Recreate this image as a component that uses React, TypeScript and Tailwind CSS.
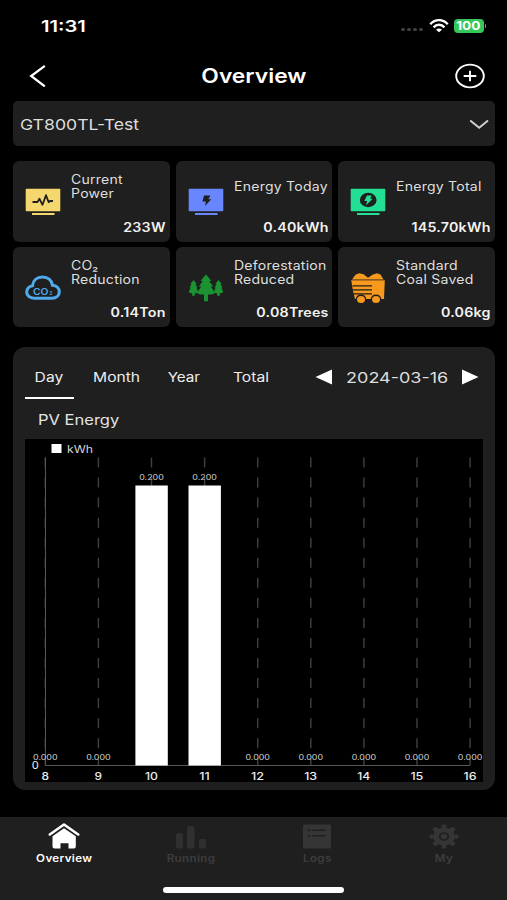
import type { ReactNode } from "react";

const HOURS = [8, 9, 10, 11, 12, 13, 14, 15, 16];
const ENERGY = [0, 0, 0.2, 0.2, 0, 0, 0, 0, 0];

function MonitorIcon({ color, children }: { color: string; children: ReactNode }) {
  return (
    <svg width="36" height="28" viewBox="0 0 36 28">
      <rect x="0.7" y="0.7" width="34.6" height="22.6" rx="0.8" fill={color} />
      <rect x="7" y="25" width="22.5" height="2" fill={color} />
      {children}
    </svg>
  );
}

function CurrentPowerIcon() {
  return (
    <MonitorIcon color="#f4d76d">
      <path
        d="M7.500 14h5l2-3.200 3 6 3.500-9.600 2.700 7 1.300-1.200h3"
        fill="none"
        stroke="#1f1f1f"
        strokeWidth="1.800"
        strokeLinejoin="round"
      />
    </MonitorIcon>
  );
}

function EnergyTodayIcon() {
  return (
    <MonitorIcon color="#6887ff">
      <path d="M16 7.5h6.3l-1.8 3.7h2.8L17 18l.9-4.600h-3.500z" fill="#1f1f1f" />
    </MonitorIcon>
  );
}

function EnergyTotalIcon() {
  return (
    <MonitorIcon color="#22df93">
      <ellipse cx="18.2" cy="12" rx="8.4" ry="7.200" fill="#1f1f1f" />
      <path d="M17 7.5h4.6l-1.4 3.2h2.5L16 17.3l1.2-4.3h-2.9z" fill="#22df93" />
    </MonitorIcon>
  );
}

function CloudIcon() {
  return (
    <svg width="36" height="26" viewBox="0 0 36 26">
      <path
        d="M9 23.2C4.800 23.200 1.700 20.500 1.700 17c0-3.300 2.600-5.700 5.800-6.300C8 5.500 12 2 17.500 2c5.300 0 9.200 3.300 10 8.300 4 .3 6.800 3 6.800 6.500 0 3.700-3.100 6.400-7.300 6.400z"
        fill="none"
        stroke="#4fabed"
        strokeWidth="3.100"
      />
      <text
        x="8"
        y="20"
        fontSize="8.800"
        fontWeight="600"
        textLength="15.500"
        lengthAdjust="spacingAndGlyphs"
        fontFamily="Inter, sans-serif"
        fill="#4fabed"
      >
        CO
      </text>
      <text x="24.500" y="20" fontSize="4.500" fontWeight="700" fontFamily="Inter, sans-serif" fill="#4fabed">
        2
      </text>
    </svg>
  );
}

function TreesIcon() {
  return (
    <svg width="36" height="28" viewBox="0 0 36 28" fill="#1c9332">
      <path d="M18 .5l5.500 6.500h-2.300l4 5.500h-2.400l4.200 6.500c-2 1.500-4.500 1.700-7 1.500v6.800h-4v-6.800c-2.500.2-5 0-7-1.500l4.200-6.500h-2.400l4-5.500h-2.300z" />
      <path d="M5.500 6l3.200 4H7.500l2 3.500H8.300l2 4.500c-1 1-2.300 1.200-3.500 1.200v2.500H4.200v-2.500C3 19.200 1.700 19 .7 18l2-4.500H1.500l2-3.500H2.300z" />
      <path d="M30.500 6l3.200 4h-1.200l2 3.500h-1.200l2 4.500c-1 1-2.300 1.200-3.500 1.200v2.500h-2.600v-2.500c-1.200 0-2.500-.2-3.500-1.200l2-4.500h-1.200l2-3.500h-1.200z" />
    </svg>
  );
}

function CoalIcon() {
  return (
    <svg width="36" height="32" viewBox="0 0 36 32">
      <path d="M2 7.500L5.500 2.800 9 1.200 13.500 2.300 18 5.800 22.500 2.800 27 1.200 30.500 2.500 33.500 7.500z" fill="#f7981f" />
      <path d="M1.200 8.300h33.600L34 27H5L3 19z" fill="#f7981f" />
      <path d="M2.500 13.800h19.500M2.500 17.800h19.500M2.500 21.800h19.500" stroke="#1f1f1f" strokeWidth="1.200" />
      <path d="M1.500 8.300h33" stroke="#a96a1e" strokeWidth="0.700" />
      <ellipse cx="11" cy="27" rx="5.200" ry="4.500" fill="#1f1f1f" />
      <ellipse cx="26" cy="27" rx="5.200" ry="4.500" fill="#1f1f1f" />
      <ellipse cx="11" cy="27.500" rx="4" ry="3.500" fill="#f7981f" />
      <ellipse cx="26" cy="27.500" rx="4" ry="3.500" fill="#f7981f" />
    </svg>
  );
}

type StatProps = {
  icon: ReactNode;
  lines: string[];
  value: string;
};

function StatCard({ icon, lines, value }: StatProps) {
  return (
    <div className="flex rounded-md bg-[#1f1f1f] pr-1">
      <div className="flex w-[58px] shrink-0 justify-center pt-[1px] pl-0.5">
        <div className="flex h-[80px] w-9 items-center">{icon}</div>
      </div>
      <div className="flex min-w-0 flex-1 flex-col justify-between pb-[7px]">
        <div className="flex h-[52px] flex-col justify-center text-[12.5px] leading-[14px] text-[#dedede]">
          {lines.map((line) => (
            <div key={line} className="origin-left scale-x-[1.125] whitespace-nowrap tracking-[0.2px]">
              {line}
            </div>
          ))}
        </div>
        <div className="origin-right scale-x-[1.14] text-right text-[12.5px] leading-[14px] font-semibold whitespace-nowrap tracking-[0.2px] text-[#f2f2f2]">
          {value}
        </div>
      </div>
    </div>
  );
}

function StatusBar() {
  return (
    <div className="flex h-[51px] items-center justify-between pr-[21px] pl-[41px]">
      <div className="origin-left scale-x-[1.26] text-[16px] font-semibold">11:31</div>
      <div className="flex items-center">
        <div className="mt-[7px] mr-1.5 flex gap-0.5">
          {[0, 1, 2, 3].map((dot) => (
            <div key={dot} className="h-[3px] w-1 rounded-sm bg-[#414141]" />
          ))}
        </div>
        <svg width="20" height="14" viewBox="0 0 20 14" fill="none" stroke="#fff" strokeWidth="2.400">
          <path d="M1.300 5.200C6-.2 14-.2 18.700 5.200" />
          <path d="M4.600 8.400c3-3.500 7.800-3.500 10.800 0" />
          <path d="M7 10.700c1.700-1.700 4.300-1.700 6 0l-3 2.600z" fill="#fff" stroke="none" />
        </svg>
        <div className="ml-[5px] flex h-[14px] w-[30px] items-center justify-center rounded-[4px] bg-[#34c759]">
          <span className="scale-x-[1.18] pt-px text-[11.5px] leading-[14px] font-bold">100</span>
        </div>
        <div className="ml-px h-1 w-[1.500px] rounded-r bg-[#34c759]" />
      </div>
    </div>
  );
}

function EnergyChart() {
  const left = 20;
  const step = 53.1;
  const base = 326.5;

  return (
    <svg width="458" height="343" viewBox="0 0 458 343" fontFamily="Inter, sans-serif" className="block bg-black">
      <rect x="26.500" y="5" width="10" height="9" fill="#fff" />
      <text x="42" y="13.500" fontSize="10" textLength="26" lengthAdjust="spacingAndGlyphs" fill="#d5d5d5">
        kWh
      </text>
      {HOURS.map((hour, i) => (
        <line
          key={hour}
          x1={left + i * step + 0.3}
          x2={left + i * step + 0.3}
          y1="18.500"
          y2={base}
          stroke="#404040"
          strokeWidth="1.400"
          strokeDasharray="10 10.050"
        />
      ))}
      <path d={`M20.500 18.500V${base}H445`} fill="none" stroke="#565656" strokeWidth="1" />
      {HOURS.map((hour, i) => {
        const x = left + i * step;
        const height = ENERGY[i] * 1400;
        return (
          <g key={hour}>
            {height > 0 && <rect x={x - 15.8} y={base - height} width="32.400" height={height} fill="#fff" />}
            <text
              x={x + 0.3}
              y={base - height - 5.6}
              fontSize="7.500"
              textAnchor="middle"
              textLength="24.500"
              lengthAdjust="spacingAndGlyphs"
              fill="#d0d0d0"
            >
              {ENERGY[i].toFixed(3)}
            </text>
            <text
              x={x + 0.2}
              y="340.500"
              fontSize="10.500"
              fontWeight="500"
              textAnchor="middle"
              textLength={hour < 10 ? 7.5 : hour === 11 ? 10.5 : 13}
              lengthAdjust="spacingAndGlyphs"
              fill="#ededed"
            >
              {hour}
            </text>
          </g>
        );
      })}
      <text x="6.800" y="329.500" fontSize="10.500" textLength="7" lengthAdjust="spacingAndGlyphs" fill="#ededed">
        0
      </text>
    </svg>
  );
}

function NavItem({ label, active, children }: { label: string; active?: boolean; children: ReactNode }) {
  return (
    <div className={`flex flex-1 flex-col items-center ${active ? "text-white" : "text-[#3d3d3d]"}`}>
      <div className="flex h-[27px] items-end">{children}</div>
      <div className="mt-[2px] scale-x-[1.16] text-[10px] leading-[14px] font-semibold tracking-[0.3px]">{label}</div>
    </div>
  );
}

export default function App() {
  return (
    <div className="flex h-[900px] w-[507px] flex-col overflow-hidden bg-black font-['Inter',sans-serif] text-white">
      <StatusBar />

      <div className="flex h-[50px] items-center justify-between pr-[21px] pl-[29px]">
        <svg width="25" height="24" viewBox="0 0 25 24" fill="none" stroke="#fff" strokeWidth="2.300">
          <path d="M15.800 1.800L2.200 12l13.600 10.300" />
        </svg>
        <h1 className="scale-x-[1.17] pt-[2px] text-[19.500px] font-semibold">Overview</h1>
        <svg width="32" height="26" viewBox="0 0 32 26" fill="none" stroke="#fff" strokeWidth="1.900">
          <ellipse cx="16" cy="13" rx="13.800" ry="11.400" />
          <path d="M9.700 13h12.600M16 7.800v10.400" />
        </svg>
      </div>

      <div className="mr-3 ml-[13px] flex h-[45px] shrink-0 items-center justify-between rounded-[5px] bg-[#1f1f1f] pr-[6px] pl-[6.500px]">
        <span className="origin-left scale-x-[1.175] pt-[3px] text-[15px] text-[#dedede]">GT800TL-Test</span>
        <svg width="20" height="12" viewBox="0 0 20 12" fill="none" stroke="#cfcfcf" strokeWidth="2">
          <path d="M1.200 2.500l9 7.200 8.800-7.200" />
        </svg>
      </div>

      <div className="mr-3 ml-[13px] mt-[15px] grid h-[166px] shrink-0 grid-cols-3 grid-rows-2 gap-x-1.5 gap-y-[5px]">
        <StatCard icon={<CurrentPowerIcon />} lines={["Current", "Power"]} value="233W" />
        <StatCard icon={<EnergyTodayIcon />} lines={["Energy Today"]} value="0.40kWh" />
        <StatCard icon={<EnergyTotalIcon />} lines={["Energy Total"]} value="145.70kWh" />
        <StatCard icon={<CloudIcon />} lines={["CO₂", "Reduction"]} value="0.14Ton" />
        <StatCard icon={<TreesIcon />} lines={["Deforestation", "Reduced"]} value="0.08Trees" />
        <StatCard icon={<CoalIcon />} lines={["Standard", "Coal Saved"]} value="0.06kg" />
      </div>

      <div className="mt-5 mr-3 ml-[13px] h-[443px] shrink-0 rounded-xl bg-[#1f1f1f] px-3">
        <div className="flex h-[52px] justify-between pt-2">
          <div className="flex text-[13px] text-[#ededed]">
            <div className="flex w-[48.500px] items-center justify-center border-b-2 border-white">
              <span className="scale-x-[1.2] pt-[4px]">Day</span>
            </div>
            <div className="flex w-[86px] items-center justify-center">
              <span className="scale-x-[1.2] pt-[2px]">Month</span>
            </div>
            <div className="flex w-[49px] items-center justify-center">
              <span className="scale-x-[1.17] pt-[2px]">Year</span>
            </div>
            <div className="flex w-[85px] items-center justify-center">
              <span className="scale-x-[1.2] pt-[2px]">Total</span>
            </div>
          </div>
          <div className="flex items-center pr-1">
            <svg width="17" height="16" viewBox="0 0 17 16" fill="#fff">
              <path d="M17 .5v15L.5 8z" />
            </svg>
            <div className="flex w-[130px] justify-center">
              <span className="scale-x-[1.24] pt-[2px] text-[14.500px] text-[#dedede]">2024-03-16</span>
            </div>
            <svg width="17" height="16" viewBox="0 0 17 16" fill="#fff">
              <path d="M0 .5v15L16.500 8z" />
            </svg>
          </div>
        </div>
        <div className="flex h-10 items-center pl-[13px]">
          <h2 className="origin-left scale-x-[1.18] text-[14px] text-[#e4e4e4]">PV Energy</h2>
        </div>
        <EnergyChart />
      </div>

      <div className="mt-[27px] flex h-[83px] shrink-0 flex-col items-center bg-[#1f1f1f] pt-[5px]">
        <div className="flex w-full pl-px">
          <NavItem label="Overview" active>
            <svg width="32" height="27" viewBox="0 0 32 27" fill="#fff">
              <path d="M1.800 12.500L16 2.500l14.200 10" fill="none" stroke="#fff" strokeWidth="2.600" strokeLinecap="round" strokeLinejoin="round" />
              <path d="M4.500 14.200L16 6.300l11.800 7.900v10.300q0 2-2 2h-5.300v-5.200h-8v5.200H6.500q-2 0-2-2z" />
            </svg>
          </NavItem>
          <NavItem label="Running">
            <svg width="32" height="27" viewBox="0 0 32 27" fill="#303030">
              <rect x="1" y="11" width="7" height="15.500" rx="2" />
              <rect x="12" y="4" width="7.500" height="22.500" rx="2" />
              <rect x="24" y="17" width="7" height="9.500" rx="2" />
            </svg>
          </NavItem>
          <NavItem label="Logs">
            <svg width="30" height="27" viewBox="0 0 30 27" fill="#353535">
              <rect x="1" y="2.500" width="28" height="24" rx="1.500" />
              <path d="M5.500 8.300h3M10.500 8.300h13M5.500 13.700h3M10.500 13.700h13" stroke="#1f1f1f" strokeWidth="1.500" />
            </svg>
          </NavItem>
          <NavItem label="My">
            <svg width="30" height="25" viewBox="-15 -12.500 30 25" fill="#353535">
              <g transform="scale(1.200 1)">
                {[0, 45, 90, 135].map((angle) => (
                  <rect key={angle} x="-2" y="-12" width="4" height="24" rx="1" transform={`rotate(${angle})`} />
                ))}
                <circle r="9" />
                <circle r="3.500" fill="none" stroke="#1f1f1f" strokeWidth="1.600" />
              </g>
            </svg>
          </NavItem>
        </div>
        <div className="mt-[21.500px] h-[6px] w-[181px] rounded-full bg-white" />
      </div>
    </div>
  );
}
